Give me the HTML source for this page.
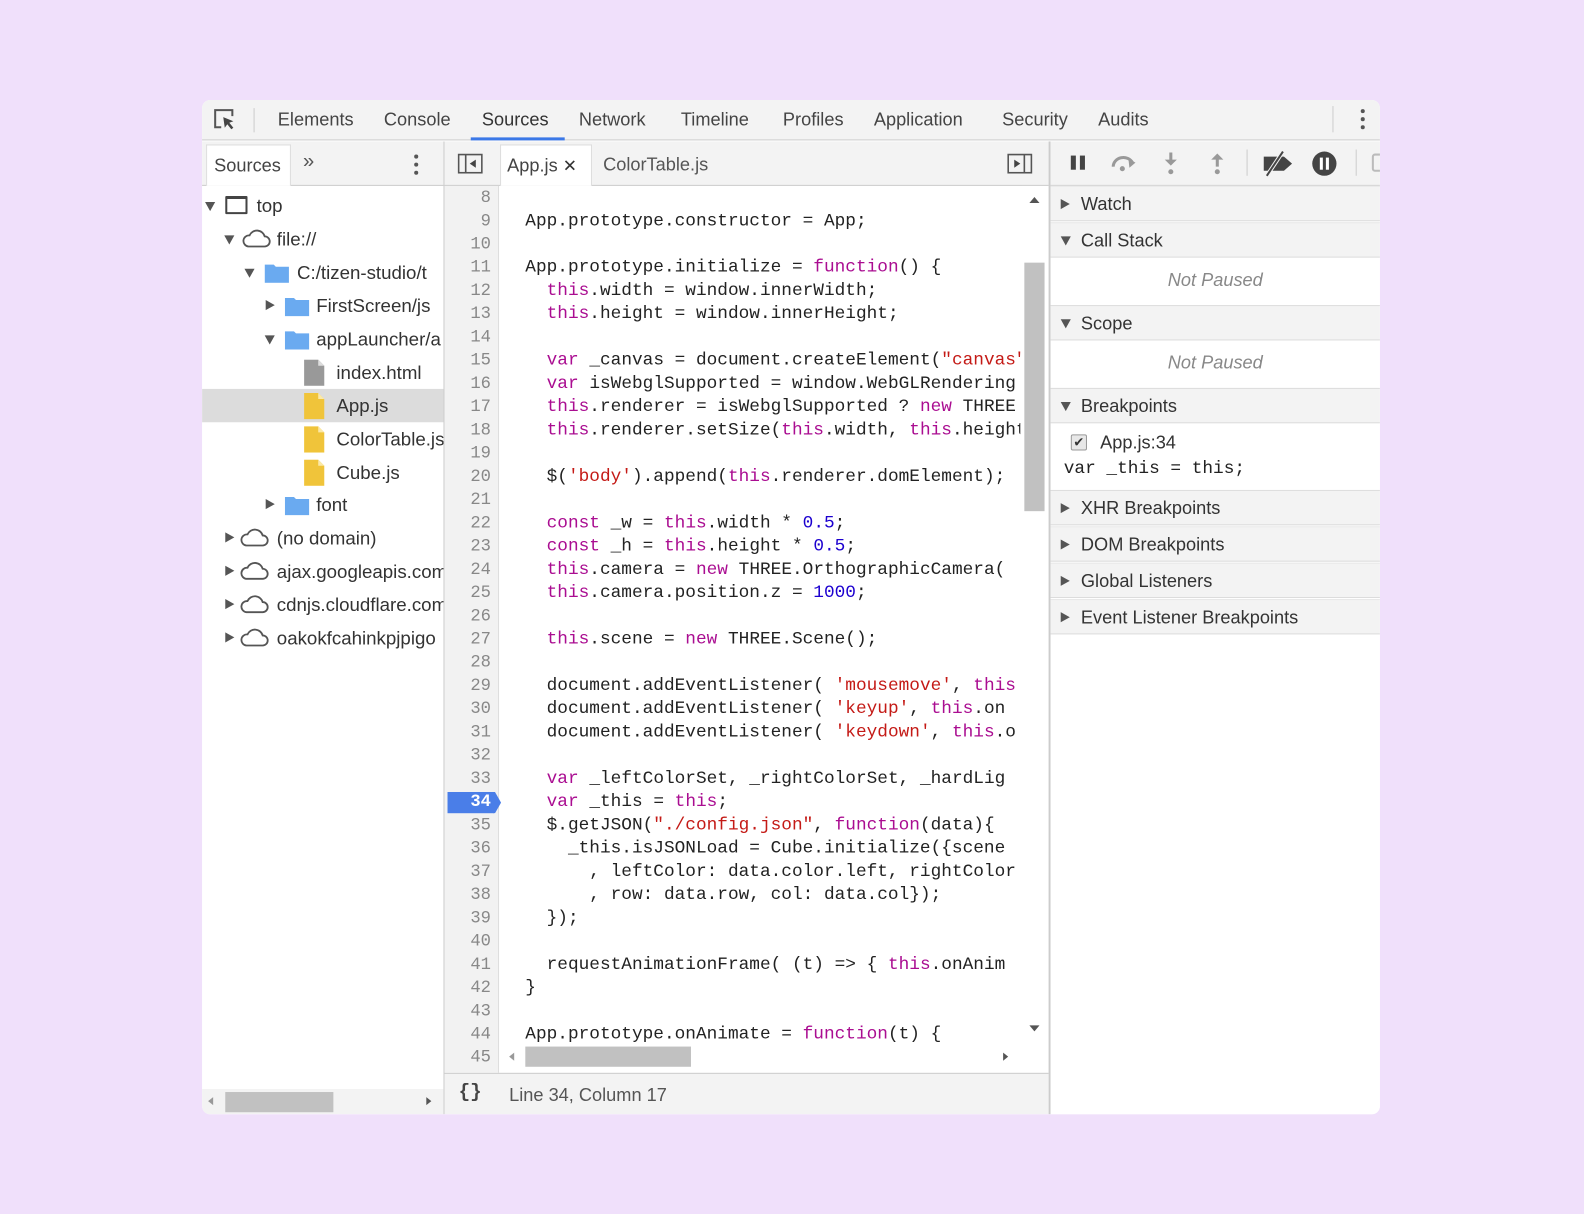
<!DOCTYPE html>
<html><head><meta charset="utf-8"><style>
*{margin:0;padding:0;box-sizing:border-box}
html,body{width:1584px;height:1214px;overflow:hidden;background:#f0e0fb}
#w{position:absolute;left:0;top:0;width:1568px;height:1202px;transform:scale(1.0102);transform-origin:0 0;font-family:"Liberation Sans",sans-serif;color:#333}
.a{position:absolute}
#panel{left:200px;top:99px;width:1166px;height:1004px;background:#fff;border-radius:8px;overflow:hidden}
.tab{position:absolute;top:0;height:40px;line-height:38px;font-size:18px;color:#444}
.mono{font-family:"Liberation Mono",monospace;font-size:18px}
.ln{position:absolute;left:0;width:46px;text-align:right;color:#888;font-family:"Liberation Mono",monospace;font-size:17px;height:23px;line-height:23px}
.cl{position:absolute;left:80px;height:23px;line-height:23px;white-space:pre;font-family:"Liberation Mono",monospace;font-size:17.6px;color:#222}
.k{color:#aa0d91}.s{color:#c41a16}.n{color:#1c00cf}
.tr{position:absolute;height:33px;line-height:33px;font-size:18.5px;color:#333;white-space:nowrap}
.arr{position:absolute;width:0;height:0}
.rd{border-left:5px solid transparent;border-right:5px solid transparent;border-top:9px solid #555}
.rr{border-top:5px solid transparent;border-bottom:5px solid transparent;border-left:9px solid #555}
.sh{position:absolute;left:0;width:326px;height:35px;line-height:34px;background:#f3f3f3;border-bottom:1px solid #dcdcdc;border-top:1px solid #e8e8e8;font-size:18px;color:#333;padding-left:30px}
.sh i{position:absolute;left:10px;top:13px}
.np{position:absolute;left:0;width:326px;text-align:center;font-style:italic;color:#888;font-size:18px}
</style></head><body><div id="w">
<div id="panel" class="a">
 <!-- top toolbar -->
 <div class="a" style="left:0;top:0;width:1166px;height:40px;background:#f3f3f3;border-bottom:1px solid #ccc"></div>
 <svg class="a" style="left:10px;top:7px" width="26" height="26" viewBox="0 0 26 26"><path d="M9 20H3V3h17v6" fill="none" stroke="#555" stroke-width="2"/><path d="M11 10l10 4-4 1.5 4 5-2 1.5-4-5-2.5 3.5z" fill="#444"/></svg>
 <div class="a" style="left:51px;top:8px;width:1px;height:24px;background:#ccc"></div>
 <div class="tab" style="left:75px">Elements</div>
 <div class="tab" style="left:180px">Console</div>
 <div class="tab" style="left:277px;color:#333">Sources</div>
 <div class="a" style="left:266px;top:37px;width:93px;height:3px;background:#3b78e7"></div>
 <div class="tab" style="left:373px">Network</div>
 <div class="tab" style="left:474px">Timeline</div>
 <div class="tab" style="left:575px">Profiles</div>
 <div class="tab" style="left:665px">Application</div>
 <div class="tab" style="left:792px">Security</div>
 <div class="tab" style="left:887px">Audits</div>
 <div class="a" style="left:1119px;top:6px;width:1px;height:26px;background:#ccc"></div>
 <div class="a" style="left:1147px;top:9px;width:4px;height:4px;border-radius:2px;background:#555;box-shadow:0 8px #555,0 16px #555"></div>

 <!-- left pane -->
 <div class="a" style="left:0;top:41px;width:239px;height:44px;background:#f3f3f3;border-bottom:1px solid #ccc"></div>
 <div class="a" style="left:4px;top:44px;width:84px;height:41px;background:#fff;border:1px solid #ddd;border-bottom:none;font-size:18px;line-height:40px;padding-left:7px;color:#444">Sources</div>
 <div class="a" style="left:100px;top:50px;font-size:20px;color:#555">»</div>
 <div class="a" style="left:210px;top:54px;width:4px;height:4px;border-radius:2px;background:#555;box-shadow:0 8px #555,0 16px #555"></div>

 <div class="a" style="left:0;top:0;width:239px;height:979px;overflow:hidden">
 <div class="a" style="left:0;top:286px;width:239px;height:33px;background:#dcdcdc"></div>
 <i class="arr rd" style="left:3px;top:101px"></i><div class="a" style="left:23px;top:95px;width:22px;height:18px;border:2px solid #444;border-top-width:3px;border-radius:1px"></div><div class="tr" style="left:54px;top:88px">top</div>
 <i class="arr rd" style="left:22px;top:134px"></i><svg class="a" style="left:39px;top:126px" width="30" height="22"><path d="M7 19h16a5 5 0 0 0 0-10 8 8 0 0 0-15-1 5.5 5.5 0 0 0-1 11z" fill="none" stroke="#555" stroke-width="1.8"/></svg><div class="tr" style="left:74px;top:121px">file://</div>
 <i class="arr rd" style="left:42px;top:167px"></i><svg class="a" style="left:62px;top:161px" width="25" height="20"><path d="M0 2h9l2 2h13v16H0z" fill="#6aaaf0"/></svg><div class="tr" style="left:94px;top:154px">C:/tizen-studio/t</div>
 <i class="arr rr" style="left:63px;top:198px"></i><svg class="a" style="left:82px;top:194px" width="25" height="20"><path d="M0 2h9l2 2h13v16H0z" fill="#6aaaf0"/></svg><div class="tr" style="left:113px;top:187px">FirstScreen/js</div>
 <i class="arr rd" style="left:62px;top:233px"></i><svg class="a" style="left:82px;top:227px" width="25" height="20"><path d="M0 2h9l2 2h13v16H0z" fill="#6aaaf0"/></svg><div class="tr" style="left:113px;top:220px">appLauncher/a</div>
 <svg class="a" style="left:101px;top:257px" width="22" height="26"><path d="M0 0h14l6 6v20H0z" fill="#999"/><path d="M14 0v6h6z" fill="#ddd"/></svg><div class="tr" style="left:133px;top:253px">index.html</div>
 <svg class="a" style="left:101px;top:290px" width="22" height="26"><path d="M0 0h14l6 6v20H0z" fill="#f0c43a"/><path d="M14 0v6h6z" fill="#fbe9a8"/></svg><div class="tr" style="left:133px;top:286px">App.js</div>
 <svg class="a" style="left:101px;top:323px" width="22" height="26"><path d="M0 0h14l6 6v20H0z" fill="#f0c43a"/><path d="M14 0v6h6z" fill="#fbe9a8"/></svg><div class="tr" style="left:133px;top:319px">ColorTable.js</div>
 <svg class="a" style="left:101px;top:356px" width="22" height="26"><path d="M0 0h14l6 6v20H0z" fill="#f0c43a"/><path d="M14 0v6h6z" fill="#fbe9a8"/></svg><div class="tr" style="left:133px;top:352px">Cube.js</div>
 <i class="arr rr" style="left:63px;top:395px"></i><svg class="a" style="left:82px;top:391px" width="25" height="20"><path d="M0 2h9l2 2h13v16H0z" fill="#6aaaf0"/></svg><div class="tr" style="left:113px;top:384px">font</div>
 <i class="arr rr" style="left:23px;top:428px"></i><svg class="a" style="left:37px;top:422px" width="30" height="22"><path d="M7 19h16a5 5 0 0 0 0-10 8 8 0 0 0-15-1 5.5 5.5 0 0 0-1 11z" fill="none" stroke="#555" stroke-width="1.8"/></svg><div class="tr" style="left:74px;top:417px">(no domain)</div>
 <i class="arr rr" style="left:23px;top:461px"></i><svg class="a" style="left:37px;top:455px" width="30" height="22"><path d="M7 19h16a5 5 0 0 0 0-10 8 8 0 0 0-15-1 5.5 5.5 0 0 0-1 11z" fill="none" stroke="#555" stroke-width="1.8"/></svg><div class="tr" style="left:74px;top:450px">ajax.googleapis.com</div>
 <i class="arr rr" style="left:23px;top:494px"></i><svg class="a" style="left:37px;top:488px" width="30" height="22"><path d="M7 19h16a5 5 0 0 0 0-10 8 8 0 0 0-15-1 5.5 5.5 0 0 0-1 11z" fill="none" stroke="#555" stroke-width="1.8"/></svg><div class="tr" style="left:74px;top:483px">cdnjs.cloudflare.com</div>
 <i class="arr rr" style="left:23px;top:527px"></i><svg class="a" style="left:37px;top:521px" width="30" height="22"><path d="M7 19h16a5 5 0 0 0 0-10 8 8 0 0 0-15-1 5.5 5.5 0 0 0-1 11z" fill="none" stroke="#555" stroke-width="1.8"/></svg><div class="tr" style="left:74px;top:516px">oakokfcahinkpjpigo</div>
 </div>
 <div class="a" style="left:239px;top:41px;width:1px;height:963px;background:#ccc"></div>
 <!-- left bottom scrollbar -->
 <div class="a" style="left:0;top:979px;width:239px;height:25px;background:#f3f3f3"></div>
 <div class="a" style="left:23px;top:982px;width:107px;height:20px;background:#c1c1c1"></div>
 <i class="arr" style="left:6px;top:987px;border-top:4px solid transparent;border-bottom:4px solid transparent;border-right:5px solid #999"></i>
 <i class="arr" style="left:222px;top:987px;border-top:4px solid transparent;border-bottom:4px solid transparent;border-left:5px solid #555"></i>

 <!-- editor -->
 <div class="a" style="left:240px;top:41px;width:598px;height:44px;background:#f3f3f3;border-bottom:1px solid #ccc"></div>
 <svg class="a" style="left:253px;top:53px" width="25" height="20"><rect x="1" y="1" width="23" height="18" fill="none" stroke="#555" stroke-width="1.6"/><line x1="8" y1="1" x2="8" y2="19" stroke="#555" stroke-width="1.6"/><path d="M18 6v8l-6-4z" fill="#444"/></svg>
 <div class="a" style="left:295px;top:44px;width:91px;height:41px;background:#fff;border:1px solid #ddd;border-bottom:none;font-size:18px;line-height:40px;padding-left:6px;color:#444">App.js <span style="font-size:17px;color:#333">✕</span></div>
 <div class="a" style="left:397px;top:44px;font-size:18px;line-height:40px;color:#555">ColorTable.js</div>
 <svg class="a" style="left:797px;top:53px" width="25" height="20"><rect x="1" y="1" width="23" height="18" fill="none" stroke="#555" stroke-width="1.6"/><line x1="17" y1="1" x2="17" y2="19" stroke="#555" stroke-width="1.6"/><path d="M7 6v8l6-4z" fill="#444"/></svg>
 <div class="a" style="left:838px;top:41px;width:2px;height:963px;background:#ccc"></div>

 <div class="a" style="left:240px;top:85px;width:598px;height:878px;overflow:hidden">
  <div class="a" style="left:0;top:0;width:54px;height:878px;background:#f2f2f2;border-right:1px solid #ddd"></div>
  <div class="a" style="left:3px;top:600px;width:46px;height:21px;background:#4a7ee8"></div>
  <svg class="a" style="left:48px;top:600px" width="9" height="21"><path d="M0 0h2l6 10.5L2 21H0z" fill="#4a7ee8"/></svg>
  <div class="a" style="left:0;top:1px;width:570px;height:900px;overflow:hidden" id="code">
  <div class="ln" style="top:0">8</div>
  <div class="ln" style="top:23px">9</div><div class="cl" style="top:23px">App.prototype.constructor = App;</div>
  <div class="ln" style="top:46px">10</div>
  <div class="ln" style="top:69px">11</div><div class="cl" style="top:69px">App.prototype.initialize = <span class="k">function</span>() {</div>
  <div class="ln" style="top:92px">12</div><div class="cl" style="top:92px">  <span class="k">this</span>.width = window.innerWidth;</div>
  <div class="ln" style="top:115px">13</div><div class="cl" style="top:115px">  <span class="k">this</span>.height = window.innerHeight;</div>
  <div class="ln" style="top:138px">14</div>
  <div class="ln" style="top:161px">15</div><div class="cl" style="top:161px">  <span class="k">var</span> _canvas = document.createElement(<span class="s">"canvas"</span></div>
  <div class="ln" style="top:184px">16</div><div class="cl" style="top:184px">  <span class="k">var</span> isWebglSupported = window.WebGLRendering</div>
  <div class="ln" style="top:207px">17</div><div class="cl" style="top:207px">  <span class="k">this</span>.renderer = isWebglSupported ? <span class="k">new</span> THREE</div>
  <div class="ln" style="top:230px">18</div><div class="cl" style="top:230px">  <span class="k">this</span>.renderer.setSize(<span class="k">this</span>.width, <span class="k">this</span>.height</div>
  <div class="ln" style="top:253px">19</div>
  <div class="ln" style="top:276px">20</div><div class="cl" style="top:276px">  $(<span class="s">'body'</span>).append(<span class="k">this</span>.renderer.domElement);</div>
  <div class="ln" style="top:299px">21</div>
  <div class="ln" style="top:322px">22</div><div class="cl" style="top:322px">  <span class="k">const</span> _w = <span class="k">this</span>.width * <span class="n">0.5</span>;</div>
  <div class="ln" style="top:345px">23</div><div class="cl" style="top:345px">  <span class="k">const</span> _h = <span class="k">this</span>.height * <span class="n">0.5</span>;</div>
  <div class="ln" style="top:368px">24</div><div class="cl" style="top:368px">  <span class="k">this</span>.camera = <span class="k">new</span> THREE.OrthographicCamera(</div>
  <div class="ln" style="top:391px">25</div><div class="cl" style="top:391px">  <span class="k">this</span>.camera.position.z = <span class="n">1000</span>;</div>
  <div class="ln" style="top:414px">26</div>
  <div class="ln" style="top:437px">27</div><div class="cl" style="top:437px">  <span class="k">this</span>.scene = <span class="k">new</span> THREE.Scene();</div>
  <div class="ln" style="top:460px">28</div>
  <div class="ln" style="top:483px">29</div><div class="cl" style="top:483px">  document.addEventListener( <span class="s">'mousemove'</span>, <span class="k">this</span></div>
  <div class="ln" style="top:506px">30</div><div class="cl" style="top:506px">  document.addEventListener( <span class="s">'keyup'</span>, <span class="k">this</span>.on</div>
  <div class="ln" style="top:529px">31</div><div class="cl" style="top:529px">  document.addEventListener( <span class="s">'keydown'</span>, <span class="k">this</span>.o</div>
  <div class="ln" style="top:552px">32</div>
  <div class="ln" style="top:575px">33</div><div class="cl" style="top:575px">  <span class="k">var</span> _leftColorSet, _rightColorSet, _hardLig</div>
  <div class="ln" style="top:598px;color:#fff;font-weight:bold">34</div><div class="cl" style="top:598px">  <span class="k">var</span> _this = <span class="k">this</span>;</div>
  <div class="ln" style="top:621px">35</div><div class="cl" style="top:621px">  $.getJSON(<span class="s">"./config.json"</span>, <span class="k">function</span>(data){</div>
  <div class="ln" style="top:644px">36</div><div class="cl" style="top:644px">    _this.isJSONLoad = Cube.initialize({scene</div>
  <div class="ln" style="top:667px">37</div><div class="cl" style="top:667px">      , leftColor: data.color.left, rightColor</div>
  <div class="ln" style="top:690px">38</div><div class="cl" style="top:690px">      , row: data.row, col: data.col});</div>
  <div class="ln" style="top:713px">39</div><div class="cl" style="top:713px">  });</div>
  <div class="ln" style="top:736px">40</div>
  <div class="ln" style="top:759px">41</div><div class="cl" style="top:759px">  requestAnimationFrame( (t) =&gt; { <span class="k">this</span>.onAnim</div>
  <div class="ln" style="top:782px">42</div><div class="cl" style="top:782px">}</div>
  <div class="ln" style="top:805px">43</div>
  <div class="ln" style="top:828px">44</div><div class="cl" style="top:828px">App.prototype.onAnimate = <span class="k">function</span>(t) {</div>
  <div class="ln" style="top:851px">45</div>
  </div>
  <!-- vertical scrollbar -->
  <div class="a" style="left:572px;top:0;width:26px;height:852px;background:#fff"></div>
  <i class="arr" style="left:579px;top:11px;border-left:5px solid transparent;border-right:5px solid transparent;border-bottom:6px solid #555"></i>
  <div class="a" style="left:574px;top:76px;width:20px;height:246px;background:#c1c1c1"></div>
  <i class="arr" style="left:579px;top:831px;border-left:5px solid transparent;border-right:5px solid transparent;border-top:6px solid #555"></i>
  <!-- horizontal scrollbar -->
  <div class="a" style="left:55px;top:852px;width:517px;height:24px;background:#fff"></div>
  <i class="arr" style="left:64px;top:858px;border-top:4px solid transparent;border-bottom:4px solid transparent;border-right:5px solid #999"></i>
  <div class="a" style="left:80px;top:852px;width:164px;height:20px;background:#c1c1c1"></div>
  <i class="arr" style="left:553px;top:858px;border-top:4px solid transparent;border-bottom:4px solid transparent;border-left:5px solid #555"></i>
 </div>
 <div class="a" style="left:240px;top:963px;width:598px;height:41px;background:#f3f3f3;border-top:1px solid #ccc"></div>
 <div class="a" style="left:254px;top:971px;font-family:'Liberation Mono',monospace;font-weight:bold;font-size:19px;color:#444">{}</div>
 <div class="a" style="left:304px;top:975px;font-size:18px;color:#555">Line 34, Column 17</div>

 <!-- right pane -->
 <div class="a" style="left:840px;top:41px;width:326px;height:44px;background:#f3f3f3;border-bottom:1px solid #ccc"></div>
 <div class="a" style="left:860px;top:55px;width:5px;height:14px;background:#444"></div><div class="a" style="left:869px;top:55px;width:5px;height:14px;background:#444"></div>
 <svg class="a" style="left:898px;top:52px" width="30" height="20"><path d="M4 14a10 9 0 0 1 19-4" fill="none" stroke="#999" stroke-width="3"/><path d="M19 6l7 4-6 5z" fill="#999"/><circle cx="13" cy="16" r="2.5" fill="#999"/></svg>
 <svg class="a" style="left:950px;top:50px" width="18" height="26"><path d="M9 2v10" stroke="#999" stroke-width="3"/><path d="M3 9l6 6 6-6z" fill="#999"/><circle cx="9" cy="21" r="2.5" fill="#999"/></svg>
 <svg class="a" style="left:996px;top:50px" width="18" height="26"><path d="M9 8v8" stroke="#999" stroke-width="3"/><path d="M3 9l6-6 6 6z" fill="#999"/><circle cx="9" cy="21" r="2.5" fill="#999"/></svg>
 <div class="a" style="left:1034px;top:49px;width:1px;height:26px;background:#ccc"></div>
 <svg class="a" style="left:1048px;top:50px" width="34" height="26"><path d="M3 6h20l8 7-8 7H3z" fill="#444"/><path d="M6 25L22 1" stroke="#f3f3f3" stroke-width="4"/><path d="M6 25L22 1" stroke="#444" stroke-width="2"/></svg>
 <svg class="a" style="left:1098px;top:50px" width="26" height="26"><circle cx="13" cy="13" r="12" fill="#444"/><rect x="8.5" y="7" width="3" height="12" fill="#fff"/><rect x="14.5" y="7" width="3" height="12" fill="#fff"/></svg>
 <div class="a" style="left:1142px;top:49px;width:1px;height:26px;background:#ccc"></div>
 <div class="a" style="left:1158px;top:53px;width:12px;height:18px;border:2px solid #bbb;border-radius:3px"></div>

 <div class="a" style="left:840px;top:85px;width:326px;height:919px;background:#fff">
  <div class="sh" style="top:0"><i class="arr rr" style="top:12px"></i>Watch</div>
  <div class="sh" style="top:36px"><i class="arr rd"></i>Call Stack</div>
  <div class="np" style="top:83px">Not Paused</div>
  <div class="sh" style="top:118px;border-top:1px solid #ddd"><i class="arr rd"></i>Scope</div>
  <div class="np" style="top:165px">Not Paused</div>
  <div class="sh" style="top:200px;border-top:1px solid #ddd"><i class="arr rd"></i>Breakpoints</div>
  <div class="a" style="left:20px;top:246px;width:16px;height:16px;border:1px solid #999;border-radius:2px;background:#e8e8e8;font-size:13px;line-height:14px;text-align:center;color:#333">✔</div>
  <div class="a" style="left:49px;top:244px;font-size:18px">App.js:34</div>
  <div class="a mono" style="left:13px;top:270px;font-size:17.6px;color:#222">var _this = this;</div>
  <div class="sh" style="top:301px;border-top:1px solid #ddd"><i class="arr rr" style="top:12px"></i>XHR Breakpoints</div>
  <div class="sh" style="top:337px"><i class="arr rr" style="top:12px"></i>DOM Breakpoints</div>
  <div class="sh" style="top:373px"><i class="arr rr" style="top:12px"></i>Global Listeners</div>
  <div class="sh" style="top:409px"><i class="arr rr" style="top:12px"></i>Event Listener Breakpoints</div>
 </div>
</div>
</div></body></html>
